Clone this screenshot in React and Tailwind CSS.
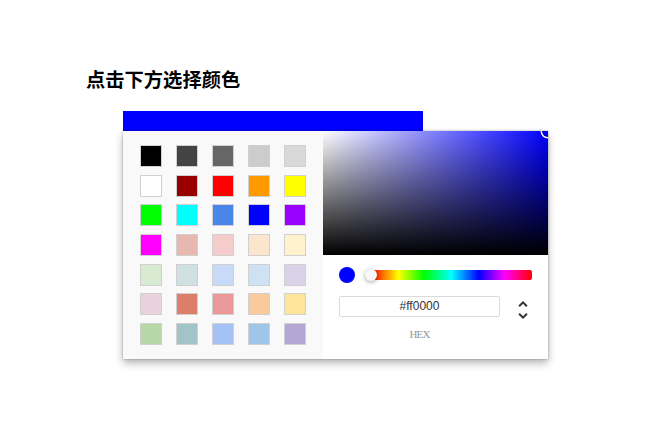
const SWATCHES = [
  ['#000000', '#434343', '#666666', '#cccccc', '#d9d9d9'],
  ['#ffffff', '#980000', '#ff0000', '#ff9900', '#ffff00'],
  ['#00ff00', '#00ffff', '#4a86e8', '#0000ff', '#9900ff'],
  ['#ff00ff', '#e6b8af', '#f4cccc', '#fce5cd', '#fff2cc'],
  ['#d9ead3', '#d0e0e3', '#c9daf8', '#cfe2f3', '#d9d2e9'],
  ['#ead1dc', '#dd7e6b', '#ea9999', '#f9cb9c', '#ffe599'],
  ['#b6d7a8', '#a2c4c9', '#a4c2f4', '#9fc5e8', '#b4a7d6'],
]

function SwatchPanel() {
  return (
    <div className="w-[200px] bg-[#f9f9f9] pl-[17px] pt-[14px] pb-[13.5px]">
      <div className="grid grid-cols-[repeat(5,22px)] gap-x-[14px] gap-y-[7.7px]">
        {SWATCHES.flat().map((c, i) => (
          <div
            key={i}
            className="w-[22px] h-[22px] border border-[#d0d0d0]"
            style={{ background: c }}
          />
        ))}
      </div>
    </div>
  )
}

function ChromePanel() {
  return (
    <div className="w-[225px] bg-white flex flex-col">
      {/* saturation */}
      <div className="relative h-[124px] overflow-hidden bg-[#0000ff]">
        <div className="absolute inset-0 bg-gradient-to-r from-white to-transparent" />
        <div className="absolute inset-0 bg-gradient-to-t from-black to-transparent" />
        <div className="absolute right-[-6px] top-[-6px] w-[12px] h-[12px] rounded-full shadow-[0_0_0_1.5px_#fff,inset_0_0_1px_1px_rgba(0,0,0,0.3)]" />
      </div>

      <div className="px-[16px] pt-[12px]">
        {/* hue row */}
        <div className="flex items-center h-[16px]">
          <div className="w-[32px] shrink-0">
            <div className="w-[16px] h-[16px] rounded-full bg-[#0000ff]" />
          </div>
          <div className="relative flex-1 h-[10px] rounded-[2px] bg-[linear-gradient(to_right,#f00_0%,#ff0_17%,#0f0_33%,#0ff_50%,#00f_67%,#f0f_83%,#f00_100%)]">
            <div className="absolute left-[-6px] top-[-1px] w-[12px] h-[12px] rounded-full bg-[#f8f8f8] shadow-[0_1px_4px_0_rgba(0,0,0,0.37)]" />
          </div>
        </div>

        {/* fields */}
        <div className="flex mt-[12.5px]">
          <div className="flex-1 flex flex-col items-center">
            <div className="w-full h-[21px] border border-[#dadada] rounded-[2px] flex items-center justify-center text-[12px] text-[#333] [font-family:'Liberation_Sans',sans-serif]">
              #ff0000
            </div>
            <div className="mt-[10px] text-[11px] leading-[14px] tracking-[-0.8px] text-[#969696] [font-family:'Liberation_Serif',serif]">
              HEX
            </div>
          </div>
          <div className="w-[32px] flex justify-end">
            <svg
              viewBox="0 0 24 24"
              className="w-[24px] h-[24px] mr-[-4px] mt-[1px] box-content border border-transparent"
            >
              <path
                fill="#333"
                d="M12,5.83L15.17,9L16.58,7.59L12,3L7.41,7.59L8.83,9L12,5.83Z"
              />
              <path
                fill="#333"
                d="M12,18.17L8.83,15L7.42,16.41L12,21L16.59,16.41L15.17,15L12,18.17Z"
              />
            </svg>
          </div>
        </div>
      </div>
    </div>
  )
}

export default function App() {
  return (
    <div className="w-[650px] h-[441px] bg-white pl-[86px] pt-[67px]">
      <h3 className="text-[19.3px] leading-[24px] font-bold text-black [font-family:'Noto_Sans_CJK_SC',sans-serif]">
        点击下方选择颜色
      </h3>
      <div className="ml-[37px] mt-[20px]">
        <div className="w-[300px] h-[20px] bg-[#0000ff]" />
        <div className="inline-flex shadow-[0_0_2px_rgba(0,0,0,0.3),0_4px_8px_rgba(0,0,0,0.3)]">
          <SwatchPanel />
          <ChromePanel />
        </div>
      </div>
    </div>
  )
}
